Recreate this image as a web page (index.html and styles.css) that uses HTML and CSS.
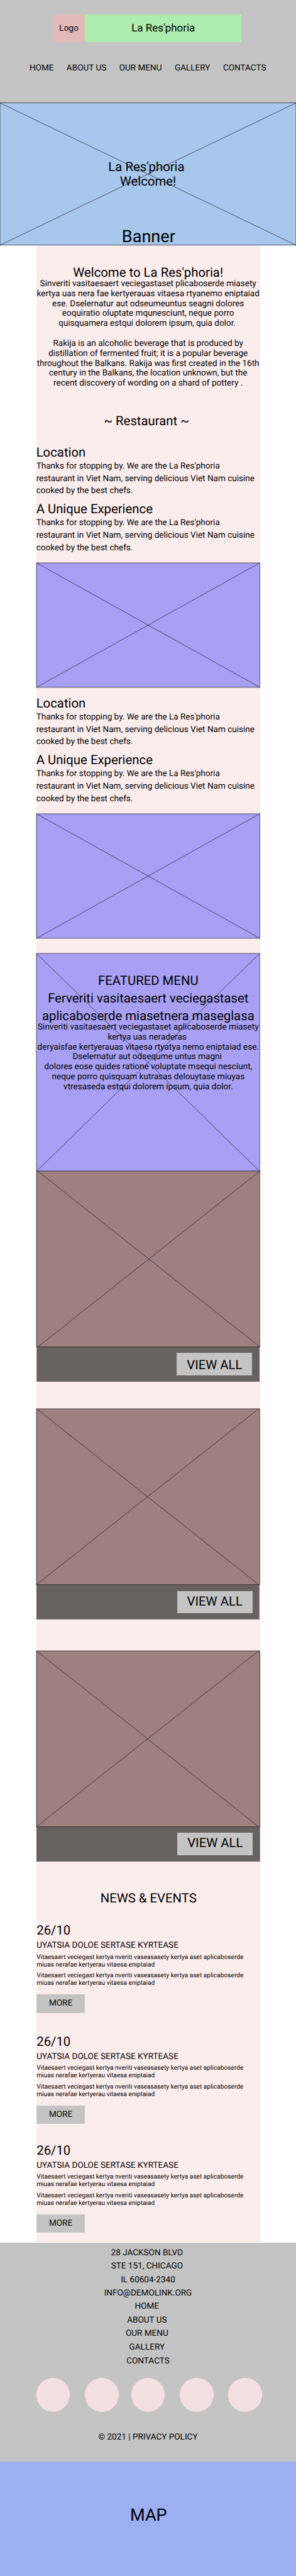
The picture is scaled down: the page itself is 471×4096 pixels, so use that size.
FILE: index.html
```html
<!DOCTYPE html>
<html lang="en">
<head>
<meta charset="utf-8">
<title>La Res'phoria</title>
<link rel="stylesheet" href="styles.css">
</head>
<body>
<header class="header">
  <div class="brand">
    <div class="brand-logo">Logo</div>
    <div class="brand-name">La Res'phoria</div>
  </div>
  <nav class="nav"><a>HOME</a><a>ABOUT US</a><a>OUR MENU</a><a>GALLERY</a><a>CONTACTS</a></nav>
</header>

<section class="banner">
  <svg class="cross"><rect x="0" y="0.3%" width="100%" height="99.7%"/><line x1="0" y1="0.3%" x2="100%" y2="100%"/><line x1="0" y1="100%" x2="100%" y2="0.3%"/></svg>
  <p class="banner-title">La Res'phoria&nbsp;<br>Welcome!</p>
  <p class="banner-label">Banner</p>
</section>

<main class="main">
  <section class="welcome">
    <h1 class="welcome-title">Welcome to La Res'phoria!</h1>
    <p class="welcome-text">Sinveriti vasitaesaert veciegastaset plicaboserde miasety<br>kertya uas nera fae kertyerauas vitaesa rtyanemo eniptaiad<br>ese. Dselernatur aut odseumeuntus seagni dolores<br>eoquiratio oluptate mqunesciunt, neque porro<br>quisquamera estqui dolorem ipsum, quia dolor.&nbsp;<br><br>Rakija is an alcoholic beverage that is produced by<br>distillation of fermented fruit; it is a popular beverage<br>throughout the Balkans. Rakija was first created in the 16th<br>century in the Balkans, the location unknown, but the<br>recent discovery of wording on a shard of pottery .</p>
    <h2 class="restaurant-title">~ Restaurant ~&nbsp;</h2>
  </section>

  <section class="feature">
    <h3 class="feature-title">Location</h3>
    <p class="feature-text">Thanks for stopping by. We are the La Res'phoria<br>restaurant in Viet Nam, serving delicious Viet Nam cuisine<br>cooked by the best chefs.</p>
    <h3 class="feature-title">A Unique Experience</h3>
    <p class="feature-text">Thanks for stopping by. We are the La Res'phoria<br>restaurant in Viet Nam, serving delicious Viet Nam cuisine<br>cooked by the best chefs.</p>
    <div class="photo"><svg class="cross"><rect x="0" y="0" width="100%" height="100%"/><line x1="0" y1="0" x2="100%" y2="100%"/><line x1="0" y1="100%" x2="100%" y2="0"/></svg></div>
  </section>
  <section class="feature">
    <h3 class="feature-title">Location</h3>
    <p class="feature-text">Thanks for stopping by. We are the La Res'phoria<br>restaurant in Viet Nam, serving delicious Viet Nam cuisine<br>cooked by the best chefs.</p>
    <h3 class="feature-title">A Unique Experience</h3>
    <p class="feature-text">Thanks for stopping by. We are the La Res'phoria<br>restaurant in Viet Nam, serving delicious Viet Nam cuisine<br>cooked by the best chefs.</p>
    <div class="photo"><svg class="cross"><rect x="0" y="0" width="100%" height="100%"/><line x1="0" y1="0" x2="100%" y2="100%"/><line x1="0" y1="100%" x2="100%" y2="0"/></svg></div>
  </section>

  <section class="menu">
    <svg class="cross"><rect x="0" y="0" width="100%" height="100%"/><line x1="0" y1="0" x2="100%" y2="100%"/><line x1="0" y1="100%" x2="100%" y2="0"/></svg>
    <h2 class="menu-title">FEATURED MENU<br>Ferveriti vasitaesaert veciegastaset<br>aplicaboserde miasetnera maseglasa</h2>
    <p class="menu-text">Sinveriti vasitaesaert veciegastaset aplicaboserde miasety<br>kertya uas neraderas&nbsp;<br>deryaisfae kertyerauas vitaesa rtyatya nemo eniptaiad ese.<br>Dselernatur aut odsequme untus magni&nbsp;<br>dolores eose quides ratione voluptate msequi nesciunt,<br>neque porro quisquam kutrasas delouytase miuyas<br>vtresaseda estqui dolorem ipsum, quia dolor.</p>
  </section>

  <article class="card card-first">
    <div class="card-image"><svg class="cross"><rect x="0" y="0" width="100%" height="100%"/><line x1="0.6%" y1="0" x2="100%" y2="100%"/><line x1="0.6%" y1="100%" x2="100%" y2="0"/></svg></div>
    <div class="card-bar"><a class="view-all">VIEW ALL</a></div>
  </article>
  <article class="card card-second">
    <div class="card-image"><svg class="cross"><rect x="0" y="0" width="100%" height="100%"/><line x1="0" y1="0" x2="99.5%" y2="100%"/><line x1="0" y1="100%" x2="99.5%" y2="0"/></svg></div>
    <div class="card-bar"><a class="view-all">VIEW ALL</a></div>
  </article>
  <article class="card card-third">
    <div class="card-image"><svg class="cross"><rect x="0" y="0" width="100%" height="100%"/><line x1="0" y1="0" x2="99.5%" y2="100%"/><line x1="0" y1="100%" x2="99.5%" y2="0"/></svg></div>
    <div class="card-bar"><a class="view-all">VIEW ALL</a></div>
  </article>

  <section class="news">
    <h2 class="news-title">NEWS &amp; EVENTS</h2>
    <article class="event">
      <h3 class="event-date">26/10</h3>
      <h4 class="event-title">UYATSIA DOLOE SERTASE KYRTEASE</h4>
      <p class="event-text">Vitaesaert veciegast kertya nveriti vaseasasety kertya aset aplicaboserde<br>miuas nerafae kertyerau vitaesa eniptaiad</p>
      <p class="event-text">Vitaesaert veciegast kertya nveriti vaseasasety kertya aset aplicaboserde<br>miuas nerafae kertyerau vitaesa eniptaiad</p>
      <a class="more">MORE</a>
    </article>
    <article class="event">
      <h3 class="event-date">26/10</h3>
      <h4 class="event-title">UYATSIA DOLOE SERTASE KYRTEASE</h4>
      <p class="event-text">Vitaesaert veciegast kertya nveriti vaseasasety kertya aset aplicaboserde<br>miuas nerafae kertyerau vitaesa eniptaiad</p>
      <p class="event-text">Vitaesaert veciegast kertya nveriti vaseasasety kertya aset aplicaboserde<br>miuas nerafae kertyerau vitaesa eniptaiad</p>
      <a class="more">MORE</a>
    </article>
    <article class="event">
      <h3 class="event-date">26/10</h3>
      <h4 class="event-title">UYATSIA DOLOE SERTASE KYRTEASE</h4>
      <p class="event-text">Vitaesaert veciegast kertya nveriti vaseasasety kertya aset aplicaboserde<br>miuas nerafae kertyerau vitaesa eniptaiad</p>
      <p class="event-text">Vitaesaert veciegast kertya nveriti vaseasasety kertya aset aplicaboserde<br>miuas nerafae kertyerau vitaesa eniptaiad</p>
      <a class="more">MORE</a>
    </article>
  </section>
</main>

<footer class="footer">
  <address class="footer-lines">28 JACKSON BLVD&nbsp;<br>STE 151, CHICAGO&nbsp;<br>IL 60604-2340<br>INFO@DEMOLINK.ORG</address>
  <nav class="footer-lines footer-nav">HOME&nbsp;<br>ABOUT US&nbsp;<br>OUR MENU&nbsp;<br>GALLERY&nbsp;<br>CONTACTS</nav>
  <div class="social"><span class="dot"></span><span class="dot"></span><span class="dot"></span><span class="dot"></span><span class="dot"></span></div>
  <p class="copyright">© 2021 | PRIVACY POLICY</p>
</footer>
<section class="map">MAP</section>
</body>
</html>
```

FILE: styles.css
```css
/* 1rem is ten design pixels */
html { font-size: 5.652px; }
* { box-sizing: border-box; }
body {
  margin: 0;
  overflow-x: hidden;
  background: #fff;
  color: #000;
  font-family: Roboto, "Liberation Sans", sans-serif;
  font-size: 2.4rem;
  line-height: 2.8rem;
  white-space: nowrap;
  text-rendering: geometricPrecision;
}
h1, h2, h3, h4, p { margin: 0; font-weight: 400; }

/* crossed placeholder frame behind a block's content */
.cross {
  position: absolute;
  inset: 0;
  z-index: -1;
  width: 100%;
  height: 100%;
  overflow: visible;
  fill: none;
  stroke: #000;
  stroke-width: 0.6px;
}
.banner, .photo, .menu, .card-image { position: relative; z-index: 0; }

.header { height: 28.86rem; padding-top: 4rem; background: #c4c4c4; }
.brand { display: flex; width: 53.15rem; height: 7.93rem; margin-left: 14.88rem; text-align: center; line-height: 8.05rem; }
.brand-logo { width: 9rem; background: #e3b9b9; }
.brand-name { flex: 1; background: #aeedae; font-size: 3rem; line-height: 7.8rem; }
.nav { display: flex; justify-content: space-between; margin: 6.02rem 8.4rem 0 8.3rem; }

.banner { height: 40.13rem; padding-top: 16rem; background: #a7c7ed; text-align: center; }
.banner-title { font-size: 3.6rem; line-height: 4.2rem; }
.banner-label { margin-top: 10.59rem; padding-left: .3rem; font-size: 4.8rem; line-height: 5.6rem; }

.main { width: 63rem; height: 561.85rem; margin-left: 10.3rem; background: #fceded; }
.welcome { height: 56.25rem; padding-top: 6.03rem; text-align: center; margin-left: -.2rem; }
.welcome-title { font-size: 3.6rem; line-height: 3.52rem; }
.restaurant-title { margin-top: 7.09rem; font-size: 3.6rem; line-height: 4.2rem; }

.feature { height: 70.59rem; margin-left: -.1rem; }
.feature-title { margin-bottom: .06rem; font-size: 3.6rem; line-height: 4.2rem; }
.feature-text { margin-bottom: 1.23rem; line-height: 3.5rem; }
.photo { width: 62.9rem; height: 35.02rem; margin-top: 2.35rem; margin-left: .05rem; background: #a8a0f4; }

.menu { width: 62.85rem; height: 61.31rem; margin-top: 1.74rem; padding-top: 5.17rem; background: #a8a0f4; text-align: center; }
.menu-title { font-size: 3.6rem; line-height: 5rem; }
.menu-text { margin-top: -.66rem; line-height: 2.8rem; }

.card { width: 62.9rem; margin-left: -.05rem; }
.card-image { height: 49.5rem; background: #9e8080; }
.card-bar { display: flex; justify-content: flex-end; height: 9.78rem; padding: 1.7rem 2.15rem 0 0; background: #686161; }
.view-all { width: 21.22rem; height: 6.31rem; background: #c4c4c4; font-size: 3.6rem; line-height: 5.85rem; text-align: center; }
.card-first .card-bar { border-left: .27rem solid #9e8080; }
.card-first .view-all { line-height: 6.95rem; }
.card-second { margin-top: 7.66rem; }
.card-third { margin-top: 8.74rem; margin-left: .05rem; }
.card-second .card-bar, .card-third .card-bar { padding-right: 1.9rem; border-right: .27rem solid #9e8080; }

.news-title { margin-top: 8.4rem; font-size: 3.6rem; line-height: 4.2rem; text-align: center; }
.event { height: 30.61rem; }
.event:first-of-type { height: 31.27rem; margin-top: 4.83rem; }
.event-date { margin-bottom: .71rem; font-size: 3.6rem; line-height: 4.2rem; }
.event-title { margin-bottom: .85rem; font-size: 2.4rem; line-height: 2.8rem; }
.event-text { margin-bottom: 1.03rem; font-size: 1.8rem; line-height: 2.1rem; }
.more { display: block; width: 13.56rem; height: 5.2rem; margin-top: 1.98rem; background: #c4c4c4; line-height: 5.05rem; text-align: center; }

.footer { height: 61.63rem; margin-top: .1rem; padding-top: 1.03rem; background: #c4c4c4; text-align: center; }
.footer-lines { font-style: normal; line-height: 3.81rem; }
.footer-nav { margin-top: -.11rem; }
.social { display: grid; grid-template-columns: 13.67rem 13.03rem 13.67rem 13.73rem 9.5rem; margin: 2.89rem 0 0 10.21rem; }
.dot { width: 9.5rem; height: 9.47rem; border-radius: 50%; background: #f4e0e0; }
.copyright { margin-top: 5.8rem; }

.map { height: 32.17rem; padding: 12.4rem 0 0 .3rem; background: #9daef1; font-size: 4.8rem; line-height: 5.6rem; text-align: center; }
```
